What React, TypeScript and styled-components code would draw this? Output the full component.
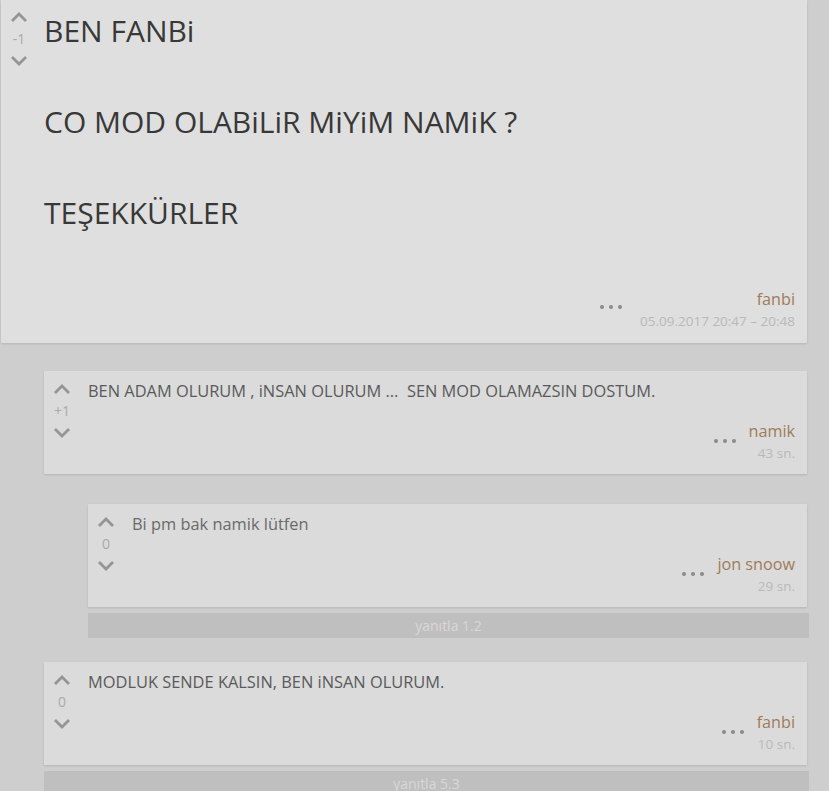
import React from "react";
import styled, { createGlobalStyle } from "styled-components";

const Global = createGlobalStyle`
  html, body { margin: 0; padding: 0; background: #cecece; }
  body { font-family: "Open Sans", "Noto Sans", sans-serif; overflow: hidden; }
`;

const Page = styled.div`
  width: 829px;
  height: 791px;
  overflow: hidden;
  padding-left: 1px;
  box-sizing: border-box;
`;

const Card = styled.div<{ $main?: boolean }>`
  background: ${(p) => (p.$main ? "#dfdfdf" : "#dbdbdb")};
  box-shadow: 0 1px 2px rgba(0, 0, 0, 0.12);
  display: grid;
  grid-template-columns: ${(p) => (p.$main ? "43px" : "44px")} 1fr;
  padding: ${(p) => (p.$main ? "8px 12px 10px 0" : "9px 12px 9px 0")};
  box-sizing: border-box;
  width: ${(p) => (p.$main ? "806px" : "auto")};
  height: ${(p) => (p.$main ? "343px" : "103px")};
`;

const Votes = styled.div`
  display: flex;
  flex-direction: column;
  align-items: center;
  width: 36px;
  padding-top: 2px;
  color: #aaa;
  font-size: 14px;
  line-height: 22px;
  gap: 4px;
`;

const Chevron = styled.svg`
  width: 18px;
  height: 14px;
  display: block;
`;

const Content = styled.div`
  display: flex;
  flex-direction: column;
`;

const MainText = styled.div`
  font-size: 30px;
  line-height: 45.5px;
  color: #383838;
  height: 280px;
`;

const ReplyText = styled.div<{ $light?: boolean }>`
  font-size: 16.4px;
  line-height: 22px;
  color: ${(p) => (p.$light ? "#6a6a6a" : "#5a5a5a")};
  height: 40px;
  white-space: pre;
`;

const Footer = styled.div`
  display: flex;
  justify-content: flex-end;
  align-items: flex-start;
`;

const Dots = styled.div<{ $main?: boolean }>`
  display: flex;
  gap: 5px;
  margin-top: ${(p) => (p.$main ? "17px" : "19px")};
  margin-right: ${(p) => (p.$main ? "18px" : "13px")};
  span {
    width: 4px;
    height: 4px;
    border-radius: 50%;
    background: #8a8a8a;
  }
`;

const Meta = styled.div`
  display: flex;
  flex-direction: column;
  align-items: flex-end;
`;

const Author = styled.div`
  font-size: 16.2px;
  line-height: 22px;
  color: #9e7b58;
`;

const Time = styled.div`
  font-size: 13.5px;
  line-height: 23px;
  color: #b9b9b9;
`;

const Thread = styled.div<{ $indent: number; $top: number }>`
  margin-left: ${(p) => p.$indent - 1}px;
  margin-top: ${(p) => p.$top}px;
  width: ${(p) => 807 - p.$indent}px;
`;

const ReplyBar = styled.div<{ $indent: number }>`
  margin-left: ${(p) => p.$indent - 1}px;
  margin-top: 6px;
  width: ${(p) => 809 - p.$indent}px;
  height: 25px;
  background: #bfbfbf;
  color: #d8d8d8;
  font-size: 14px;
  line-height: 25px;
  text-align: center;
`;

const Up = () => (
  <Chevron viewBox="0 0 18 14">
    <polyline points="2,11 9,4 16,11" fill="none" stroke="#959595" strokeWidth="2.8" />
  </Chevron>
);
const Down = () => (
  <Chevron viewBox="0 0 18 14">
    <polyline points="2,3 9,10 16,3" fill="none" stroke="#959595" strokeWidth="2.8" />
  </Chevron>
);

const VoteBox = ({ score }: { score: string }) => (
  <Votes>
    <Up />
    <div>{score}</div>
    <Down />
  </Votes>
);

const FooterBlock = ({ author, time, main }: { author: string; time: string; main?: boolean }) => (
  <Footer>
    <Dots $main={main}>
      <span />
      <span />
      <span />
    </Dots>
    <Meta>
      <Author>{author}</Author>
      <Time>{time}</Time>
    </Meta>
  </Footer>
);

const Reply = ({ score, text, author, time, light }: { score: string; text: string; author: string; time: string; light?: boolean }) => (
  <Card>
    <VoteBox score={score} />
    <Content>
      <ReplyText $light={light}>{text}</ReplyText>
      <FooterBlock author={author} time={time} />
    </Content>
  </Card>
);

export default function App() {
  return (
    <>
      <Global />
      <Page>
        <Card $main>
          <VoteBox score="-1" />
          <Content>
            <MainText>
              <div>BEN FANBi</div>
              <div>&nbsp;</div>
              <div>CO MOD OLABiLiR MiYiM NAMiK ?</div>
              <div>&nbsp;</div>
              <div>TEŞEKKÜRLER</div>
            </MainText>
            <FooterBlock main author="fanbi" time="05.09.2017 20:47 – 20:48" />
          </Content>
        </Card>
        <Thread $indent={44} $top={28}>
          <Reply
            score="+1"
            text="BEN ADAM OLURUM , iNSAN OLURUM ...  SEN MOD OLAMAZSIN DOSTUM."
            author="namik"
            time="43 sn."
          />
        </Thread>
        <Thread $indent={88} $top={30}>
          <Reply score="0" text="Bi pm bak namik lütfen" author="jon snoow" time="29 sn." light />
        </Thread>
        <ReplyBar $indent={88}>yanıtla 1.2</ReplyBar>
        <Thread $indent={44} $top={24}>
          <Reply score="0" text="MODLUK SENDE KALSIN, BEN iNSAN OLURUM." author="fanbi" time="10 sn." />
        </Thread>
        <ReplyBar $indent={44}>yanıtla 5.3</ReplyBar>
      </Page>
    </>
  );
}
